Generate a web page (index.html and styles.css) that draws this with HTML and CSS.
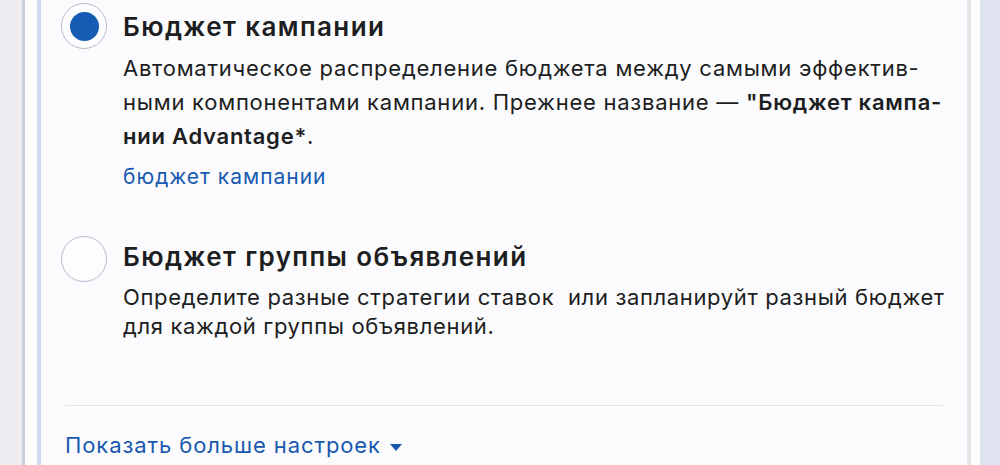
FILE: index.html
```html
<!DOCTYPE html>
<html lang="ru">
  <head>
    <meta charset="utf-8">
    <title>Бюджет</title>
    <link rel="stylesheet" href="styles.css">
  </head>
  <body>
    <div class="frame">
      <section class="card">
        <label class="option">
          <span class="radio checked"></span>
          <span class="option-body">
            <span class="option-title">Бюджет кампании</span>
            <span class="option-text">Автоматическое распределение бюджета между самыми эффектив-<br>ными компонентами кампании. Прежнее название — <b>"Бюджет кампа-<br>нии Advantage*</b>.</span>
            <a class="option-link" href="#">бюджет кампании</a>
          </span>
        </label>

        <label class="option">
          <span class="radio"></span>
          <span class="option-body">
            <span class="option-title">Бюджет группы объявлений</span>
            <span class="option-text tight">Определите разные стратегии ставок&nbsp; или запланируйт разный бюджет<br>для каждой группы объявлений.</span>
          </span>
        </label>

        <hr class="divider">

        <a class="more" href="#">Показать больше настроек <span class="caret"></span></a>
      </section>
      <div class="side"></div>
    </div>
  </body>
</html>
```

FILE: styles.css
```css
* {
  box-sizing: border-box;
}

html, body {
  height: 100%;
}

body {
  margin: 0;
  background: #f0edf2;
  font-family: Inter, "Noto Sans", sans-serif;
  color: #1c1e21;
  overflow: hidden;
}

.frame {
  display: flex;
  height: 100%;
  margin-left: 22px;
  border-left: 3px solid #c8d0de;
  background: #fdfdfe;
}

.card {
  margin-left: 12px;
  width: 934px;
  border-left: 4px solid #cedbef;
  border-right: 4px solid #e5e6ec;
  background: #fbfbfd;
  padding: 3px 24px 0 24px;
}

.side {
  flex: 1;
  margin-left: 9px;
  background: #dfe4f0;
}

/* radio rows */
.option {
  display: flex;
  gap: 16px;
  cursor: pointer;
}

.option + .option {
  margin-top: 41px;
}

.radio {
  flex: none;
  width: 46px;
  height: 46px;
  margin-left: -4px;
  border: 1.5px solid #b3bacb;
  border-radius: 50%;
  display: flex;
  align-items: center;
  justify-content: center;
  background: #fdfdfe;
}

.option + .option .radio {
  margin-top: 3px;
}

.radio.checked::after {
  content: '';
  width: 29px;
  height: 29px;
  border-radius: 50%;
  background: #165bb4;
}

.option-body {
  display: flex;
  flex-direction: column;
  padding-top: 7px;
  white-space: nowrap;
}

.option-title {
  font-size: 26px;
  font-weight: 600;
  line-height: 34px;
  letter-spacing: 1.4px;
  color: #1c1e21;
}

.option-text {
  margin-top: 7px;
  font-size: 22px;
  line-height: 34px;
  letter-spacing: 0.75px;
  color: #1c1e21;
}

.option-text.tight {
  margin-top: 9px;
  line-height: 29px;
  letter-spacing: 0.65px;
}

.option-text b {
  font-weight: 600;
}

.option-link {
  margin-top: 9px;
  font-size: 21px;
  line-height: 30px;
  letter-spacing: 1px;
  color: #1859b0;
  text-decoration: none;
}

.divider {
  height: 1px;
  margin: 64px 0 0;
  border: 0;
  background: #e3e3e8;
}

.more {
  display: inline-block;
  margin-top: 24px;
  font-size: 22px;
  line-height: 30px;
  letter-spacing: 0.9px;
  color: #1859b0;
  text-decoration: none;
}

.caret {
  display: inline-block;
  margin-left: 2px;
  vertical-align: middle;
  border-left: 6px solid transparent;
  border-right: 6px solid transparent;
  border-top: 7px solid #1859b0;
}
```
